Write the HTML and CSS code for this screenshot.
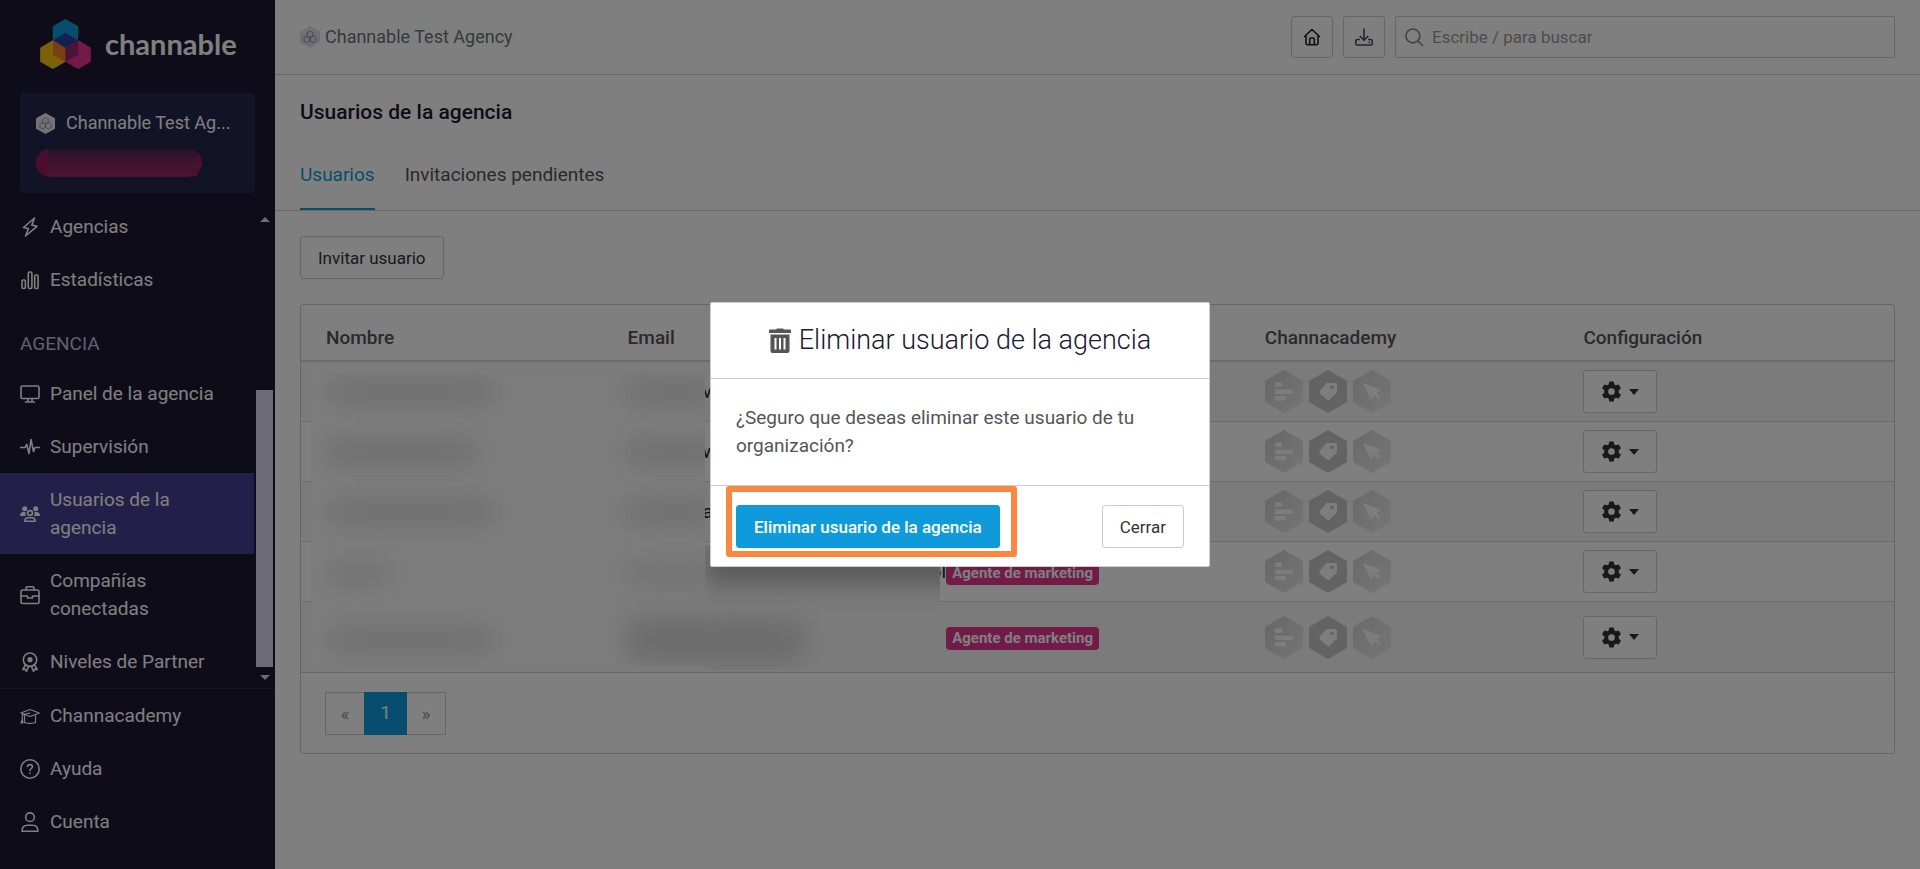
FILE: index.html
```html
<!DOCTYPE html>
<html lang="es">
<head>
<meta charset="utf-8">
<title>Usuarios de la agencia</title>
<meta name="viewport" content="width=device-width, initial-scale=1">
<link rel="stylesheet" href="styles.css">
</head>
<body>
<svg class="sprite" aria-hidden="true">
  <defs>
    <linearGradient id="shade" x1="0" y1="0" x2="1" y2="1"><stop offset="0" stop-color="#cdcdcd"/><stop offset="1" stop-color="#ebebeb"/></linearGradient>
    <linearGradient id="shade-b" x1="0" y1="0" x2="1" y2="1"><stop offset="0" stop-color="#d4d4d4"/><stop offset="1" stop-color="#ececec"/></linearGradient>
    <symbol id="agency" viewBox="0 0 20 22">
      <path d="M10 0l10 5.500v11L10 22 0 16.500v-11z" fill="currentColor"/>
      <g fill="none" stroke="#77778c" stroke-width=".7"><path d="M10 5l3 1.700v3.500L10 12l-3-1.800V6.700zM7 9.800l3 1.700V15l-3 1.700L4 15v-3.500zM13 9.800l3 1.700V15l-3 1.700-3-1.700v-3.500z"/></g>
    </symbol>
    <symbol id="badge-bars" viewBox="0 0 38 43">
      <path d="M19 0l19 11v21L19 43 0 32V11z" fill="url(#shade)"/>
      <g fill="#fbfbfb"><rect x="10" y="12.500" width="7" height="4.500" rx="1"/><rect x="10" y="19.500" width="18" height="4.500" rx="1"/><rect x="10" y="26" width="11" height="4.500" rx="1"/></g>
    </symbol>
    <symbol id="badge-tag" viewBox="0 0 38 43">
      <path d="M19 0l19 11v21L19 43 0 32V11z" fill="#c6c6c6"/>
      <path d="M18 13h8q2 0 2 2v6.500q0 1-.7 1.800l-6.600 6.300q-1.400 1.200-2.800 0l-7-6.200q-1.500-1.400 0-2.800l6-6.900q.5-.7 1.100-.7z" fill="#fbfbfb"/><circle cx="23" cy="17.300" r="1.900" fill="#c6c6c6"/>
    </symbol>
    <symbol id="badge-cursor" viewBox="0 0 38 43">
      <path d="M19 0l19 11v21L19 43 0 32V11z" fill="url(#shade-b)"/>
      <path d="M10.500 13l16.500 6.500q1.200.7.200 1.600L23.500 23l4 4.600-1.900 1.900-4.300-4.400-2.300 3.600q-1 1-1.700-.2L10 14z" fill="#fbfbfb"/>
    </symbol>
    <symbol id="gear" viewBox="0 0 22 22">
      <path fill="currentColor" fill-rule="evenodd" d="M8.700.5h4.600l.7 3.100 1.600.9 3-.9 2.300 4-2.300 2.200v2.400l2.300 2.200-2.300 4-3-.9-1.600.9-.7 3.100H8.700L8 18.400l-1.600-.9-3 .9-2.300-4 2.300-2.200V9.800L1.100 7.600l2.300-4 3 .9L8 3.600zM11 7.500a3.500 3.500 0 1 0 0 7 3.500 3.500 0 0 0 0-7z"/>
    </symbol>
  </defs>
</svg>

<div class="app">
  <aside class="sidebar">
    <a class="brand" href="#">
      <svg class="brand-mark" viewBox="120 57 152 150" aria-hidden="true">
        <path fill="#0f9bdb" d="M196 57l38 22v42l-38 22-38-22V79z"/>
        <path fill="#f9c31b" d="M158 121l38 22v42l-38 22-38-22v-42z"/>
        <path fill="#e53690" d="M234 121l38 22v42l-38 22-38-22v-42z"/>
        <path fill="#f57f20" d="M158 121l38 22v42l-38-21z"/>
        <path fill="#962670" d="M234 121l-38 22v42l38-21z"/>
        <path fill="#2842a0" d="M196 99l38 22-38 22-38-22z"/>
      </svg>
      <span>channable</span>
    </a>

    <div class="account">
      <div class="account-name"><svg class="account-icon" aria-hidden="true"><use href="#agency"/></svg><span>Channable Test Ag...</span></div>
      <div class="account-pill"><span class="pill-mask"></span></div>
    </div>

    <div class="nav-scroll">
      <nav class="nav">
        <a class="nav-item" href="#"><svg viewBox="0 0 20 20"><path d="M14.500 1L3.500 10.500l5 1.300L5.500 19 17 9.300l-5.200-1.200z"/></svg><span>Agencias</span></a>
        <a class="nav-item" href="#"><svg viewBox="0 0 20 20"><rect x="2" y="10" width="3.400" height="8.500" rx="1.200"/><rect x="8.300" y="2" width="3.600" height="16.500" rx="1.200"/><rect x="14.700" y="5" width="3.400" height="13.500" rx="1.200"/></svg><span>Estadísticas</span></a>
        <h2 class="nav-title">AGENCIA</h2>
        <a class="nav-item" href="#"><svg viewBox="0 0 20 20"><rect x="1" y="2" width="18" height="12.500" rx="1.500"/><path d="M8 15v2.500m4-2.500v2.500M5.500 18h9"/></svg><span>Panel de la agencia</span></a>
        <a class="nav-item" href="#"><svg viewBox="0 0 20 20"><path d="M0 10.500h5l1.700-3 2.300 9L11 2.500l2.500 12 1.500-4h5"/></svg><span>Supervisión</span></a>
        <a class="nav-item active" href="#"><svg viewBox="0 0 20 20"><g fill="currentColor" stroke="none"><circle cx="4.700" cy="4.700" r="2.500"/><circle cx="15.700" cy="4.700" r="2.500"/><path d="M0 12q0-4 3.500-4h2.200q-1 2 .3 4zM20 12q0-4-3.500-4h-2.200q1 2-.3 4z"/></g><circle cx="10" cy="9" r="2.400"/><path d="M4.800 17.300q0-3.500 3.500-3.500h3.400q3.500 0 3.500 3.500z"/></svg><span>Usuarios de la agencia</span></a>
        <a class="nav-item" href="#"><svg viewBox="0 0 20 20"><rect x="1" y="5" width="18" height="13.500" rx="1.700"/><path d="M6 5V3q0-1.200 1.200-1.200h5.600Q14 1.800 14 3v2M1 11h6.500v2h5v-2H19"/></svg><span>Compañías conectadas</span></a>
        <a class="nav-item" href="#"><svg viewBox="0 0 20 20"><circle cx="10" cy="7.700" r="6.700"/><circle cx="10" cy="7.700" r="1.800" fill="currentColor"/><path d="M5.500 13l-2.700 4.500 2.400-.2 1.300 2 2-4.500M14.500 13l2.700 4.500-2.400-.2-1.300 2-2-4.500"/></svg><span>Niveles de Partner</span></a>
      </nav>
      <div class="scrollbar" aria-hidden="true"><i class="arrow-up"></i><i class="thumb"></i><i class="arrow-down"></i></div>
    </div>

    <nav class="nav nav-bottom">
      <a class="nav-item" href="#"><svg viewBox="0 0 20 20" class="thin"><path d="M.8 7L10 3.500 19.300 7 10 10.500zM4.500 9v7.500q5.500 1.800 11 0V9M10 7l-7.700 1.800v5M1 17l1.200-3.500L3 17z"/></svg><span>Channacademy</span></a>
      <a class="nav-item" href="#"><svg viewBox="0 0 20 20"><circle cx="10" cy="10" r="9.200"/><path d="M7.500 7.500Q7.700 5.600 10 5.600t2.500 2q0 1.300-1.300 2-1.200.7-1.200 2"/><path d="M10 14v.3"/></svg><span>Ayuda</span></a>
      <a class="nav-item" href="#"><svg viewBox="0 0 20 20"><circle cx="10" cy="5.200" r="4.300"/><path d="M2 19.200q0-6 5.500-6h5q5.500 0 5.500 6z"/></svg><span>Cuenta</span></a>
    </nav>
  </aside>

  <main class="main">
    <header class="topbar">
      <div class="crumb"><svg class="crumb-icon" aria-hidden="true"><use href="#agency"/></svg><span>Channable Test Agency</span></div>
      <div class="tools">
        <button class="btn tool" type="button" aria-label="Inicio"><svg viewBox="0 0 18 18"><path d="M1 9l8-7.500L17 9M3 8v7.500q0 1.200 1.200 1.200h9.600q1.200 0 1.200-1.200V8M6.700 16.500V11q0-1 1-1h2.600q1 0 1 1v5.500"/></svg></button>
        <button class="btn tool tool-soft" type="button" aria-label="Descargas"><svg viewBox="0 0 18 18"><path d="M9 .5V12M4.800 8L9 12.300 13.200 8M5 11.500H2q-1.200 0-1.200 1.200v3.100Q.8 17 2 17h14q1.200 0 1.200-1.200v-3.100q0-1.200-1.200-1.200h-3M13.500 14.300h1.500"/></svg></button>
        <label class="search"><svg viewBox="0 0 20 20" aria-hidden="true"><circle cx="8.300" cy="8.300" r="7.300"/><path d="M13.500 13.500L19 19"/></svg><input type="search" placeholder="Escribe / para buscar" aria-label="Buscar"></label>
      </div>
    </header>

    <h1 class="page-title">Usuarios de la agencia</h1>
    <nav class="tabs">
      <a class="tab current" href="#">Usuarios</a>
      <a class="tab" href="#">Invitaciones pendientes</a>
    </nav>

    <div class="content">
      <button class="btn" type="button">Invitar usuario</button>

      <section class="card">
        <table class="users">
          <thead>
            <tr><th>Nombre</th><th>Email</th><th></th><th>Channacademy</th><th>Configuración</th></tr>
          </thead>
          <tbody>
            <tr>
              <td></td><td><span class="email">v</span></td><td></td>
              <td><div class="badges"><svg><use href="#badge-bars"/></svg><svg><use href="#badge-tag"/></svg><svg><use href="#badge-cursor"/></svg></div></td>
              <td><button class="btn config" type="button" aria-label="Configurar"><svg><use href="#gear"/></svg><i class="caret"></i></button></td>
            </tr>
            <tr>
              <td></td><td><span class="email">w</span></td><td></td>
              <td><div class="badges"><svg><use href="#badge-bars"/></svg><svg><use href="#badge-tag"/></svg><svg><use href="#badge-cursor"/></svg></div></td>
              <td><button class="btn config" type="button" aria-label="Configurar"><svg><use href="#gear"/></svg><i class="caret"></i></button></td>
            </tr>
            <tr>
              <td></td><td><span class="email">a</span></td><td></td>
              <td><div class="badges"><svg><use href="#badge-bars"/></svg><svg><use href="#badge-tag"/></svg><svg><use href="#badge-cursor"/></svg></div></td>
              <td><button class="btn config" type="button" aria-label="Configurar"><svg><use href="#gear"/></svg><i class="caret"></i></button></td>
            </tr>
            <tr>
              <td></td><td><span class="email email-end">ol</span></td><td><span class="role">Agente de marketing</span></td>
              <td><div class="badges"><svg><use href="#badge-bars"/></svg><svg><use href="#badge-tag"/></svg><svg><use href="#badge-cursor"/></svg></div></td>
              <td><button class="btn config" type="button" aria-label="Configurar"><svg><use href="#gear"/></svg><i class="caret"></i></button></td>
            </tr>
            <tr class="tall">
              <td></td><td></td><td><span class="role">Agente de marketing</span></td>
              <td><div class="badges"><svg><use href="#badge-bars"/></svg><svg><use href="#badge-tag"/></svg><svg><use href="#badge-cursor"/></svg></div></td>
              <td><button class="btn config" type="button" aria-label="Configurar"><svg><use href="#gear"/></svg><i class="caret"></i></button></td>
            </tr>
          </tbody>
        </table>
        <div class="mask mask-main" aria-hidden="true">
          <div class="mask-row"><i class="blob name-l"></i><i class="blob mail-s"></i></div>
          <div class="mask-row"><i class="blob name-m"></i><i class="blob mail-s"></i></div>
          <div class="mask-row"><i class="blob name-l"></i><i class="blob mail-s"></i></div>
          <div class="mask-row faint"><i class="blob name-s"></i><i class="blob mail-s"></i></div>
          <div class="mask-row"><i class="blob name-l"></i><i class="blob mail-t"></i></div>
        </div>
        <div class="mask mask-side" aria-hidden="true"><i class="blob side-top"></i><i class="blob side-low"></i></div>
        <footer class="card-footer">
          <nav class="pages" aria-label="Paginación"><a href="#">«</a><a class="current" href="#">1</a><a href="#">»</a></nav>
        </footer>
      </section>
    </div>
  </main>
</div>

<div class="backdrop">
  <section class="modal" role="dialog" aria-modal="true" aria-labelledby="modal-title">
    <header class="modal-header">
      <svg class="trash" viewBox="0 0 22 25" aria-hidden="true"><path fill="#555" fill-rule="evenodd" d="M7 1.500L8 .5h6l1 1h6q1 0 1 1V5H0V2.500q0-1 1-1zM1.500 6.500h19V23q0 2-2 2h-15q-2 0-2-2zM5.500 10v11.500h2V10zm4.500 0v11.500h2V10zm4.500 0v11.500h2V10z"/></svg>
      <h2 id="modal-title">Eliminar usuario de la agencia</h2>
    </header>
    <p class="modal-body">¿Seguro que deseas eliminar este usuario de tu organización?</p>
    <footer class="modal-footer">
      <button class="btn primary" type="button">Eliminar usuario de la agencia</button>
      <button class="btn" type="button">Cerrar</button>
    </footer>
  </section>
</div>
</body>
</html>
```
FILE: styles.css
```css
* { box-sizing: border-box; }

body {
  margin: 0;
  font: 19px/28px Roboto, "Liberation Sans", sans-serif;
  color: #555;
  background: #fff;
}

a { color: inherit; text-decoration: none; }
h1, h2, p { margin: 0; }
.sprite { position: absolute; width: 0; height: 0; }

.app { display: flex; min-height: 100vh; }

/* Sidebar */
.sidebar {
  flex: 0 0 275px;
  min-width: 0;
  display: flex;
  flex-direction: column;
  background: #1c1932;
  color: #fff;
}
.brand {
  display: flex;
  align-items: center;
  gap: 14px;
  padding: 19px 0 0 40px;
  font: 700 29px/50px Lato, sans-serif;
}
.brand-mark { width: 51px; height: 50px; }
.account {
  margin: 24px 20px 7px;
  height: 100px;
  padding: 15px;
  border: 1px solid #2b2a54;
  border-radius: 4px;
  background: #262650;
}
.account-name { display: flex; align-items: center; gap: 11px; font-size: 18px; white-space: nowrap; }
.account-icon { width: 19px; height: 21px; color: #e4e4ee; }
.account-pill {
  width: 166px;
  height: 28px;
  margin-top: 12px;
  border-radius: 14px;
  background: #981d5e;
}
.pill-mask {
  display: block;
  width: 149px;
  height: 27px;
  margin-left: 12px;
  background: linear-gradient(#4a2450, #80285f 50%, #96265f);
}
.nav-scroll { display: flex; justify-content: space-between; }
.nav-scroll .nav { flex: 0 0 254px; }
.nav-item {
  display: flex;
  align-items: center;
  gap: 10px;
  padding: 13px 36px 12px 20px;
}
.nav-item span { flex: 1; }
.nav-item svg {
  flex: none;
  width: 20px;
  height: 20px;
  fill: none;
  stroke: #fff;
  stroke-width: 1.600;
  stroke-linejoin: round;
  stroke-linecap: round;
}
.nav-item svg.thin { stroke-width: 1.200; }
.nav-item.active { background: #463e90; }
.nav-title { padding: 24px 20px 9px; font-size: 19px; font-weight: 400; color: #c4c0dc; }
.nav-bottom { border-top: 1px solid #2d2b56; }
.scrollbar {
  display: flex;
  flex-direction: column;
  align-items: center;
  width: 17px;
  margin: 17px 2px 8px 0;
}
.thumb { width: 100%; height: 277px; background: #dad4ee; margin-bottom: 8px; margin-top: auto; }
.arrow-up, .arrow-down { border: 5px solid transparent; }
.arrow-up { border-top: 0; border-bottom-color: #dad4ee; }
.arrow-down { border-bottom: 0; border-top-color: #dad4ee; }

/* Top bar */
.main { flex: 1; min-width: 0; }
.topbar {
  display: flex;
  align-items: center;
  justify-content: space-between;
  height: 75px;
  padding: 0 25px;
  border-bottom: 1px solid #d2d2d2;
}
.crumb { display: flex; align-items: center; gap: 5px; font-size: 18px; color: #6d737b; }
.crumb-icon { width: 20px; height: 22px; color: #e0deec; }
.tools { display: flex; gap: 10px; flex: 0 1 604px; }
.search {
  flex: 1;
  display: flex;
  align-items: center;
  gap: 8px;
  height: 42px;
  padding: 0 9px;
  border: 1px solid #ccc;
  border-radius: 2px;
}
.search svg { width: 19px; height: 19px; fill: none; stroke: #888; stroke-width: 1.700; }
.search input {
  flex: 1;
  min-width: 0;
  border: 0;
  padding: 0;
  outline: 0;
  background: none;
  font: 17px/24px Roboto, sans-serif;
}
.search input::placeholder { color: #999; }

.btn {
  height: 43px;
  padding: 0 17px;
  border: 1px solid #ccc;
  border-radius: 3px;
  background: #fff;
  color: #333;
  font: 17px/28px Roboto, "Liberation Sans", sans-serif;
}
.tool { width: 42px; height: 42px; padding: 0; display: grid; place-items: center; }
.tool svg { width: 18px; height: 18px; fill: none; stroke: #222; stroke-width: 1.600; stroke-linejoin: round; }
.tool-soft svg { stroke: #4c4a66; }

/* Page heading */
.page-title { padding: 23px 25px 0; font-size: 21px; font-weight: 500; color: #1c1932; }
.tabs { display: flex; gap: 30px; padding: 22px 25px 0; border-bottom: 1px solid #d2d2d2; }
.tab { padding: 13px 0 19px; border-bottom: 2px solid transparent; }
.tab.current { color: #0f9bdb; border-color: #0f9bdb; }
.content { padding: 25px; }

/* Users table */
.card {
  position: relative;
  margin-top: 25px;
  border: 1px solid #ccc;
  border-radius: 3px;
}
.users { width: 100%; table-layout: fixed; border-collapse: separate; border-spacing: 0; }
.users th {
  height: 57px;
  padding: 11px 8px 0;
  border-bottom: 2px solid #d6d6d6;
  text-align: left;
  font-weight: 500;
}
.users th:first-child { padding-left: 25px; }
.users td { height: 60px; padding: 0 8px; border-bottom: 1px solid #d6d6d6; }
.users .tall td { height: 71px; border-bottom-color: #ccc; }
.users tbody tr:nth-child(odd) { background: #f7f7f7; }
.email { margin-left: 75px; color: #1c1932; white-space: nowrap; }
.email-end { margin-left: 303px; }
.role {
  display: inline-block;
  padding: 0 6px;
  border-radius: 4px;
  background: #e53690;
  color: #fff;
  font-size: 15px;
  font-weight: 700;
  line-height: 23px;
  white-space: nowrap;
}
.badges { display: flex; gap: 6px; }
.badges svg { width: 38px; height: 43px; }
.config { display: flex; align-items: center; gap: 7px; padding: 0 17px; }
.config svg { width: 21px; height: 21px; }
.caret { border: 5px solid transparent; border-top: 6px solid #333; border-bottom: 0; }
.card-footer { padding: 19px 24px 18px; }
.pages { display: inline-flex; vertical-align: top; border: 1px solid #ccc; }
.pages a { width: 38px; line-height: 41px; text-align: center; color: #999; }
.pages .current { width: 43px; margin: -1px 0; background: #0f9bdb; color: #fff; }

/* Blurred personal data */
.mask { position: absolute; overflow: hidden; background: #f9f9f9; }
.mask-main { left: 10px; top: 67px; width: 394px; height: 294px; }
.mask-side { left: 404px; top: 240px; width: 235px; height: 125px; background: linear-gradient(#fcfcfc, #f7f7f7 50%); }
.mask-row { display: flex; align-items: center; gap: 134px; height: 60px; padding: 0 0 20px 16px; }
.mask-row:nth-child(4) { padding-bottom: 16px; }
.mask-row:nth-child(5) { padding-bottom: 4px; }
.blob { flex: none; height: 20px; border-radius: 10px; background: #d8d8d8; filter: blur(12px); }
.faint .blob { background: #e2e2e2; }
.name-l { width: 165px; }
.name-m { width: 150px; margin-right: 15px; }
.name-s { width: 65px; margin-right: 100px; }
.mail-s { width: 100px; }
.mail-t { width: 120px; height: 44px; }
.side-top { display: block; width: 260px; height: 40px; background: #b4b4b4; border-radius: 0; }
.side-low { display: block; width: 120px; height: 44px; margin: 34px 0 0 -20px; background: #d8d8d8; }

/* Dialog */
.backdrop {
  position: fixed;
  inset: 0;
  display: grid;
  place-items: center;
  background: rgba(0, 0, 0, .5);
}
.modal {
  width: 500px;
  border: 1px solid #ccc;
  border-radius: 2px;
  background: #fff;
}
.modal-header {
  display: flex;
  align-items: center;
  justify-content: center;
  gap: 8px;
  height: 76px;
  border-bottom: 1px solid #ccc;
}
.modal-header h2 { padding-bottom: 2px; font-size: 27px; line-height: 36px; font-weight: 300; color: #1c1932; }
.trash { width: 22px; height: 25px; }
.modal-body { padding: 25px; border-bottom: 1px solid #ccc; }
.modal-footer { display: flex; justify-content: space-between; padding: 19px 25px 18px; }
.primary {
  border-color: #0f9bdb;
  background: #0f9bdb;
  color: #fff;
  font-weight: 500;
  position: relative;
}
.primary::after {
  content: "";
  position: absolute;
  inset: -20px -18px -10px -11px;
  border: 6px solid #fb8640;
  border-radius: 3px;
}
```
